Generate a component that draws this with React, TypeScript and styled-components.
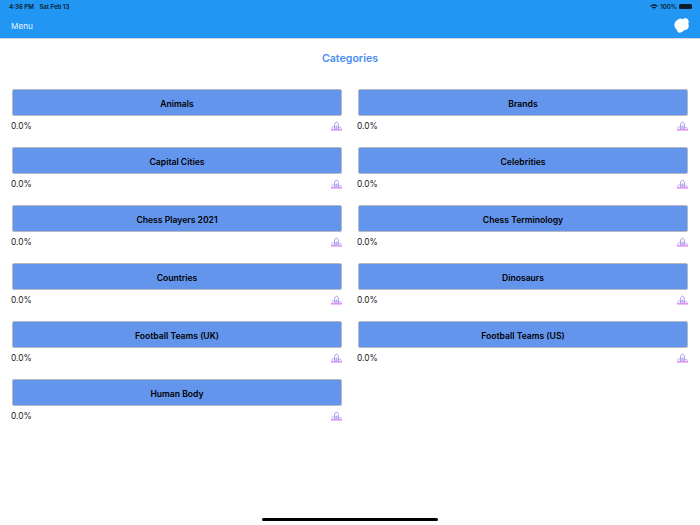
import styled, { createGlobalStyle } from "styled-components";

const categories = [
  "Animals",
  "Brands",
  "Capital Cities",
  "Celebrities",
  "Chess Players 2021",
  "Chess Terminology",
  "Countries",
  "Dinosaurs",
  "Football Teams (UK)",
  "Football Teams (US)",
  "Human Body",
];

const GlobalStyle = createGlobalStyle`
  html, body {
    margin: 0;
    padding: 0;
    background: #fff;
    font-family: "Inter", "Liberation Sans", sans-serif;
  }
`;

function PodiumIcon() {
  return (
    <svg width="11" height="10" viewBox="0 0 11 10" fill="none">
      <path d="M1 8V5.8H3.6V8" stroke="#c9a8f2" strokeWidth="0.8" />
      <path d="M7.4 8V6.4H10V8" stroke="#c9a8f2" strokeWidth="0.8" />
      <path d="M3.6 8V3L5.5 0.8L7.4 3V8" stroke="#9d95ea" strokeWidth="0.9" />
      <path d="M5 8V5H6V8" stroke="#8f86e6" strokeWidth="0.7" />
      <path d="M0 8.8H11" stroke="#e28af6" strokeWidth="1.5" />
    </svg>
  );
}

function WifiIcon() {
  return (
    <svg width="8" height="6" viewBox="0 0 9 7">
      <path d="M0 2.3C2.5 -0.2 6.5 -0.2 9 2.3L8 3.3C6 1.5 3 1.5 1 3.3Z" fill="#0b1c2c" />
      <path d="M2 4.2C3.4 3 5.6 3 7 4.2L6 5.2C5.1 4.5 3.9 4.5 3 5.2Z" fill="#0b1c2c" />
      <path d="M3.6 5.8C4.1 5.4 4.9 5.4 5.4 5.8L4.5 6.8Z" fill="#0b1c2c" />
    </svg>
  );
}

function LogoBlob() {
  return (
    <svg width="15" height="15" viewBox="0 0 15 15">
      <path
        d="M4.5 1.2C6 0.2 7.6 0.6 8.6 1.2C10 -0.1 12.8 -0.2 14 1.4C15.2 3 14.8 4.6 14.2 5.8C15.2 7.6 14.8 10 13.2 11.2C11.8 12.2 10.6 12 9.8 12.6C8.4 14.4 5.6 15.2 4 14.2C3 13.4 3.4 12.4 2.6 11.6C0.8 10 0 7.8 0.6 5.6C1 3.6 2.8 2 4.5 1.2Z"
        fill="#fff"
      />
    </svg>
  );
}

export default function App() {
  return (
    <Page>
      <GlobalStyle />
      <Header>
        <StatusBar>
          <StatusGroup>
            <span>4:36 PM</span>
            <span>Sat Feb 13</span>
          </StatusGroup>
          <StatusRight>
            <WifiIcon />
            <span>100%</span>
            <Battery />
          </StatusRight>
        </StatusBar>
        <NavBar>
          <MenuLabel>Menu</MenuLabel>
          <LogoBlob />
        </NavBar>
      </Header>
      <Title>Categories</Title>
      <Grid>
        {categories.map((name) => (
          <Cell key={name}>
            <CategoryButton>{name}</CategoryButton>
            <ProgressRow>
              <Percent>0.0%</Percent>
              <PodiumIcon />
            </ProgressRow>
          </Cell>
        ))}
      </Grid>
      <HomeBar />
    </Page>
  );
}

const Page = styled.div`
  position: relative;
  width: 700px;
  height: 525px;
  overflow: hidden;
  background: #fff;
`;

const Header = styled.header`
  height: 38px;
  background: #2196f3;
  border-bottom: 1px solid #d4d8dc;
`;

const StatusBar = styled.div`
  height: 13px;
  padding: 0 8px 0 9px;
  display: flex;
  justify-content: space-between;
  align-items: center;
  font-size: 6.1px;
  font-weight: 600;
  color: #0b1c2c;
`;

const StatusGroup = styled.div`
  display: flex;
  gap: 5.5px;
`;

const StatusRight = styled.div`
  display: flex;
  align-items: center;
  gap: 2px;
`;

const Battery = styled.div`
  width: 13px;
  height: 5px;
  background: #0b1c2c;
  border-radius: 1.5px;
`;

const NavBar = styled.div`
  height: 25px;
  padding: 0 11px;
  display: flex;
  justify-content: space-between;
  align-items: center;
`;

const MenuLabel = styled.span`
  font-size: 8.2px;
  color: #e8f4fe;
`;

const Title = styled.h1`
  margin: 0;
  padding-top: 12px;
  height: 39px;
  box-sizing: border-box;
  text-align: center;
  font-size: 10.6px;
  line-height: 15px;
  font-weight: 600;
  color: #4a8cf2;
`;

const Grid = styled.div`
  margin-top: 11px;
  padding: 0 12px;
  display: grid;
  grid-template-columns: 330px 330px;
  column-gap: 16px;
`;

const Cell = styled.div`
  height: 58px;
`;

const CategoryButton = styled.button`
  display: block;
  box-sizing: border-box;
  width: 330px;
  height: 27px;
  padding: 2px 0 0;
  border: 1px solid #b4b9c2;
  border-radius: 2px;
  background: #6495ed;
  font-family: inherit;
  font-size: 8.6px;
  font-weight: 600;
  color: #000;
`;

const ProgressRow = styled.div`
  display: flex;
  justify-content: space-between;
  align-items: flex-end;
  height: 15px;
  margin-left: -1px;
`;

const Percent = styled.span`
  font-size: 8.4px;
  line-height: 10px;
  color: #222;
`;

const HomeBar = styled.div`
  position: absolute;
  left: 262px;
  bottom: 4px;
  width: 176px;
  height: 3px;
  border-radius: 2px;
  background: #000;
`;
